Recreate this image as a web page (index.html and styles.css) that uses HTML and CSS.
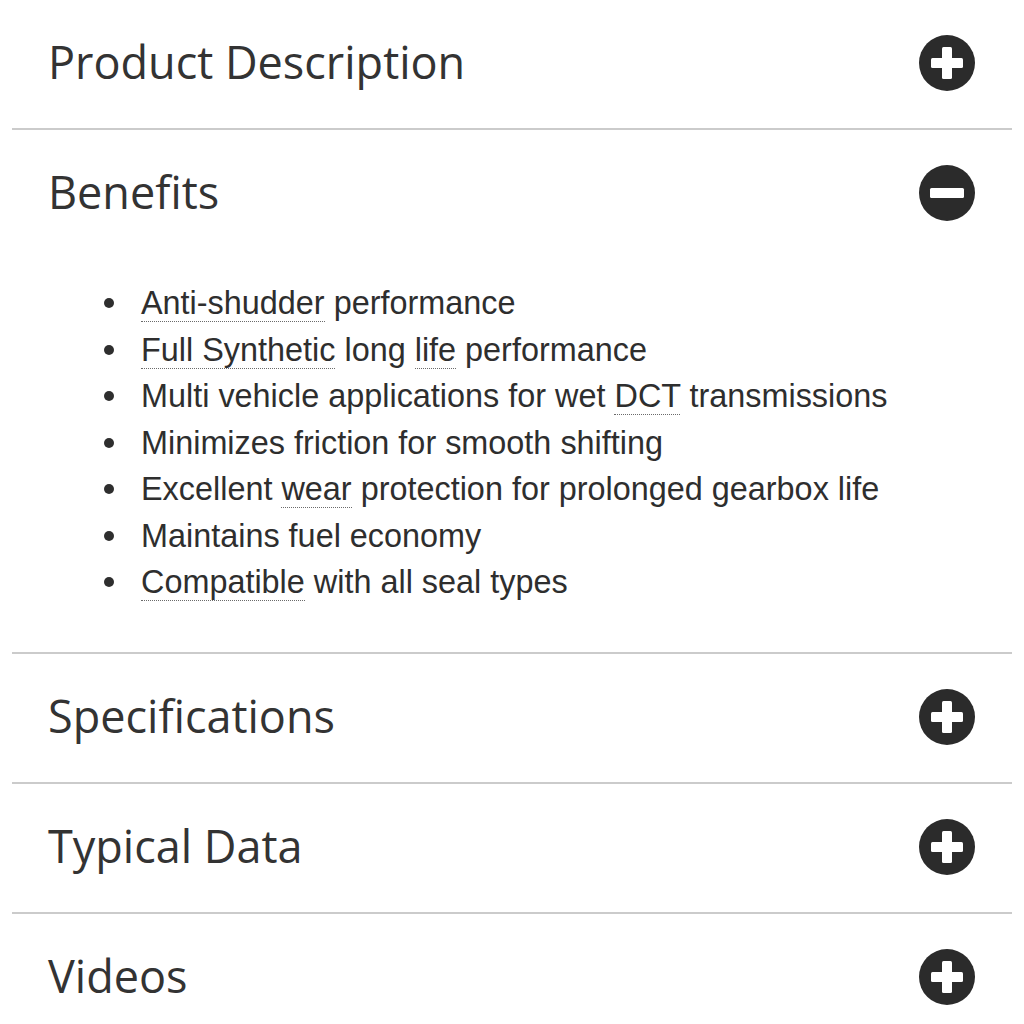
FILE: index.html
```html
<!DOCTYPE html>
<html lang="en">
  <head>
    <meta charset="UTF-8">
    <meta name="viewport" content="width=device-width, initial-scale=1.0">
    <title>Product Details</title>
    <link rel="stylesheet" href="styles.css">
  </head>
  <body>
    <div class="accordion">
      <div class="section">
        <div class="section-head">
          <span class="title">Product Description</span>
          <svg class="toggle" viewBox="0 0 56 56"><circle cx="28" cy="28" r="28"/><rect x="12" y="23" width="32" height="10" rx="1.5"/><rect x="23" y="12" width="10" height="32" rx="1.5"/></svg>
        </div>
      </div>
      <div class="section open">
        <div class="section-head">
          <span class="title">Benefits</span>
          <svg class="toggle" viewBox="0 0 56 56"><circle cx="28" cy="28" r="28"/><rect x="11" y="23" width="34" height="10" rx="1.5"/></svg>
        </div>
        <div class="section-body">
          <ul class="benefits">
            <li><abbr>Anti-shudder</abbr> performance</li>
            <li><abbr>Full Synthetic</abbr> long <abbr>life</abbr> performance</li>
            <li>Multi vehicle applications for wet <abbr>DCT</abbr> transmissions</li>
            <li>Minimizes friction for smooth shifting</li>
            <li>Excellent <abbr>wear</abbr> protection for prolonged gearbox life</li>
            <li>Maintains fuel economy</li>
            <li><abbr>Compatible</abbr> with all seal types</li>
          </ul>
        </div>
      </div>
      <div class="section">
        <div class="section-head">
          <span class="title">Specifications</span>
          <svg class="toggle" viewBox="0 0 56 56"><circle cx="28" cy="28" r="28"/><rect x="12" y="23" width="32" height="10" rx="1.5"/><rect x="23" y="12" width="10" height="32" rx="1.5"/></svg>
        </div>
      </div>
      <div class="section">
        <div class="section-head">
          <span class="title">Typical Data</span>
          <svg class="toggle" viewBox="0 0 56 56"><circle cx="28" cy="28" r="28"/><rect x="12" y="23" width="32" height="10" rx="1.5"/><rect x="23" y="12" width="10" height="32" rx="1.5"/></svg>
        </div>
      </div>
      <div class="section">
        <div class="section-head">
          <span class="title">Videos</span>
          <svg class="toggle" viewBox="0 0 56 56"><circle cx="28" cy="28" r="28"/><rect x="12" y="23" width="32" height="10" rx="1.5"/><rect x="23" y="12" width="10" height="32" rx="1.5"/></svg>
        </div>
      </div>
    </div>
  </body>
</html>
```

FILE: styles.css
```css
body {
  margin: 0;
  background-color: #fff;
  color: #2e2e2e;
  font-family: "Open Sans", "Noto Sans", sans-serif;
}
.accordion {
  padding: 0 12px;
}
.section {
  border-bottom: 2px solid #cbcbcb;
}
.section:last-child {
  border-bottom: none;
}
.section-head {
  display: flex;
  align-items: center;
  justify-content: space-between;
  height: 126px;
  padding: 0 37px 2px 36px;
}
.title {
  font-size: 45px;
  font-weight: 400;
  color: #333;
  margin-top: -3px;
}
.toggle {
  width: 56px;
  height: 56px;
  fill: #2b2b2b;
}
.toggle rect {
  fill: #fff;
}
.section-body {
  padding: 22px 0 46px;
}
.benefits {
  margin: 0;
  padding-left: 129px;
  list-style: none;
  font-family: "Liberation Sans", Arial, sans-serif;
  font-size: 32.4px;
  line-height: 46.5px;
  color: #2e2e2e;
}
.benefits li {
  position: relative;
}
.benefits li::before {
  content: "";
  position: absolute;
  left: -37px;
  top: 18px;
  width: 10px;
  height: 10px;
  border-radius: 50%;
  background: #2e2e2e;
}
.benefits abbr {
  text-decoration: none;
  border-bottom: 1px dotted #6a6a6a;
}
```
